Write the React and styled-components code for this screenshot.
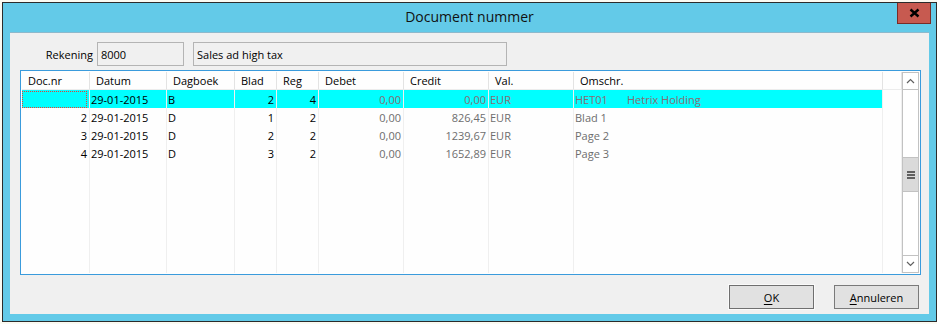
import React from 'react'
import styled, { createGlobalStyle } from 'styled-components'

const GlobalStyle = createGlobalStyle`
  body {
    margin: 0;
    background: #fbfaf2;
    font-family: "Open Sans", "Noto Sans", sans-serif;
    font-size: 11px;
    color: #000;
  }
`;

const Desktop = styled.div`
  padding: 2px 0 0 2px;
`;

const Window = styled.div`
  box-sizing: border-box;
  width: 935px;
  height: 320px;
  border: 1px solid #2b2b2b;
  background: #63cae8;
  display: flex;
  flex-direction: column;
`;

const TitleBar = styled.div`
  height: 29px;
  flex-shrink: 0;
  display: grid;
  grid-template-columns: 1fr auto 1fr;
  align-items: center;
`;

const Title = styled.div`
  grid-column: 2;
  font-size: 14px;
  color: #111;
  padding-bottom: 2px;
`;

const Close = styled.div`
  grid-column: 3;
  justify-self: end;
  align-self: start;
  box-sizing: border-box;
  width: 34px;
  height: 21px;
  margin-right: 5px;
  background: #c75a50;
  border: 1px solid #7a2b26;
  border-top: none;
  display: flex;
  align-items: center;
  justify-content: center;
`;

const Client = styled.div`
  flex: 1;
  margin: 0 7px 7px 7px;
  background: #f0f0f0;
  border-top: 1px solid #8db9cc;
  padding: 9px 10px 0 10px;
  display: flex;
  flex-direction: column;
`;

const FieldRow = styled.div`
  display: flex;
  align-items: center;
  height: 24px;
`;

const Label = styled.div`
  width: 73px;
  margin-right: 4px;
  text-align: right;
`;

const Field = styled.div`
  box-sizing: border-box;
  width: ${p => p.$w}px;
  margin-right: ${p => p.$mr || 0}px;
  height: 24px;
  border: 1px solid #b4b4b4;
  padding: 0 3px;
  display: flex;
  align-items: center;
`;

const Grid = styled.div`
  box-sizing: border-box;
  width: 901px;
  height: 205px;
  margin-top: 4px;
  border: 1px solid #3a9bdc;
  background: #fefefe;
  padding: 1px;
  display: flex;
`;

const Table = styled.div`
  flex: 1;
  display: flex;
  flex-direction: column;
`;

const COLS = '68px 77px 68px 42px 42px 85px 85px 85px 309px 1fr';

const Row = styled.div`
  display: grid;
  grid-template-columns: ${COLS};
  height: 18px;
  flex-shrink: 0;
`;

const FillRow = styled.div`
  display: grid;
  grid-template-columns: ${COLS};
  flex: 1;
`;

const HeadCell = styled.div`
  border-right: 1px solid #e3e3e3;
  border-bottom: 1px solid #ececec;
  padding-left: 6px;
  display: flex;
  align-items: center;
  white-space: nowrap;
`;

const Cell = styled.div`
  position: relative;
  box-sizing: border-box;
  border-right: 1px solid #efefef;
  background: ${p => (p.$sel ? '#00ffff' : 'transparent')};
  color: ${p => (p.$gray ? (p.$sel ? '#8a6c72' : '#6d6d6d') : '#000')};
  padding: 0 ${p => (p.$right ? 2 : 1)}px 0 1px;
  display: flex;
  align-items: center;
  justify-content: ${p => (p.$right ? 'flex-end' : 'flex-start')};
  white-space: nowrap;
`;

const Focus = styled.div`
  position: absolute;
  inset: 1px 2px 0 0;
  border: 1px dotted #e8402f;
`;

const Code = styled.span`
  display: inline-block;
  width: 52px;
`;

const Scroll = styled.div`
  box-sizing: border-box;
  width: 17px;
  border: 1px solid #c2c2c2;
  display: flex;
  flex-direction: column;
  background: #fff;
`;

const Arrow = styled.div`
  height: 16px;
  flex-shrink: 0;
  display: flex;
  align-items: center;
  justify-content: center;
  border-top: ${p => (p.$down ? '1px solid #c2c2c2' : 'none')};
  border-bottom: ${p => (p.$down ? 'none' : '1px solid #c2c2c2')};
`;

const Track = styled.div`
  flex: 1;
  display: flex;
  flex-direction: column;
`;

const Thumb = styled.div`
  height: 33px;
  background: #dadada;
  border-top: 1px solid #c2c2c2;
  border-bottom: 1px solid #c2c2c2;
  display: flex;
  flex-direction: column;
  align-items: center;
  justify-content: center;
  gap: 1px;
`;

const Grip = styled.div`
  width: 8px;
  height: 2px;
  background: #606060;
`;

const Buttons = styled.div`
  display: flex;
  justify-content: flex-end;
  gap: 20px;
  margin-top: 10px;
`;

const Button = styled.div`
  box-sizing: border-box;
  width: 85px;
  height: 24px;
  background: #e1e1e1;
  border: 1px solid ${p => (p.$default ? '#6f6f6f' : '#7a7a7a')};
  box-shadow: ${p => (p.$default ? '0 0 0 1px #fafafa' : 'none')};
  display: flex;
  align-items: center;
  justify-content: center;
  u { text-underline-offset: 2px; }
`;

const columns = ['Doc.nr', 'Datum', 'Dagboek', 'Blad', 'Reg', 'Debet', 'Credit', 'Val.', 'Omschr.', ''];

const rows = [
  { nr: '', datum: '29-01-2015', dagboek: 'B', blad: 2, reg: 4, debet: '0,00', credit: '0,00', val: 'EUR', code: 'HET01', oms: 'Hetrix Holding', sel: true },
  { nr: 2, datum: '29-01-2015', dagboek: 'D', blad: 1, reg: 2, debet: '0,00', credit: '826,45', val: 'EUR', oms: 'Blad 1' },
  { nr: 3, datum: '29-01-2015', dagboek: 'D', blad: 2, reg: 2, debet: '0,00', credit: '1239,67', val: 'EUR', oms: 'Page 2' },
  { nr: 4, datum: '29-01-2015', dagboek: 'D', blad: 3, reg: 2, debet: '0,00', credit: '1652,89', val: 'EUR', oms: 'Page 3' },
];

function Chevron({ down }) {
  return (
    <svg width="9" height="6" viewBox="0 0 9 6">
      <polyline
        points={down ? '1,1 4.5,4.5 8,1' : '1,5 4.5,1.5 8,5'}
        fill="none"
        stroke="#606060"
        strokeWidth="1.2"
      />
    </svg>
  );
}

export default function App() {
  return (
    <Desktop>
      <GlobalStyle />
      <Window>
        <TitleBar>
          <Title>Document nummer</Title>
          <Close>
            <svg width="11" height="10" viewBox="0 0 11 10">
              <path d="M1.5 1.5 L9.5 8.5 M9.5 1.5 L1.5 8.5" stroke="#000" strokeWidth="2.4" />
            </svg>
          </Close>
        </TitleBar>
        <Client>
          <FieldRow>
            <Label>Rekening</Label>
            <Field $w={87} $mr={9}>8000</Field>
            <Field $w={314}>Sales ad high tax</Field>
          </FieldRow>
          <Grid>
            <Table>
              <Row>
                {columns.map((c, i) => (
                  <HeadCell key={i}>{c}</HeadCell>
                ))}
              </Row>
              {rows.map((r, i) => (
                <Row key={i}>
                  <Cell $sel={r.sel} $right>
                    {r.nr}
                    {r.sel && <Focus />}
                  </Cell>
                  <Cell $sel={r.sel}>{r.datum}</Cell>
                  <Cell $sel={r.sel}>{r.dagboek}</Cell>
                  <Cell $sel={r.sel} $right>{r.blad}</Cell>
                  <Cell $sel={r.sel} $right>{r.reg}</Cell>
                  <Cell $sel={r.sel} $right $gray>{r.debet}</Cell>
                  <Cell $sel={r.sel} $right $gray>{r.credit}</Cell>
                  <Cell $sel={r.sel} $gray>{r.val}</Cell>
                  <Cell $sel={r.sel} $gray>
                    {r.code && <Code>{r.code}</Code>}
                    {r.oms}
                  </Cell>
                  <Cell />
                </Row>
              ))}
              <FillRow>
                {columns.map((c, i) => (
                  <Cell key={i} />
                ))}
              </FillRow>
            </Table>
            <Scroll>
              <Arrow>
                <Chevron />
              </Arrow>
              <Track>
                <div style={{ height: 67 }} />
                <Thumb>
                  <Grip />
                  <Grip />
                  <Grip />
                </Thumb>
              </Track>
              <Arrow $down>
                <Chevron down />
              </Arrow>
            </Scroll>
          </Grid>
          <Buttons>
            <Button $default>
              <span><u>O</u>K</span>
            </Button>
            <Button>
              <span><u>A</u>nnuleren</span>
            </Button>
          </Buttons>
        </Client>
      </Window>
    </Desktop>
  );
}
